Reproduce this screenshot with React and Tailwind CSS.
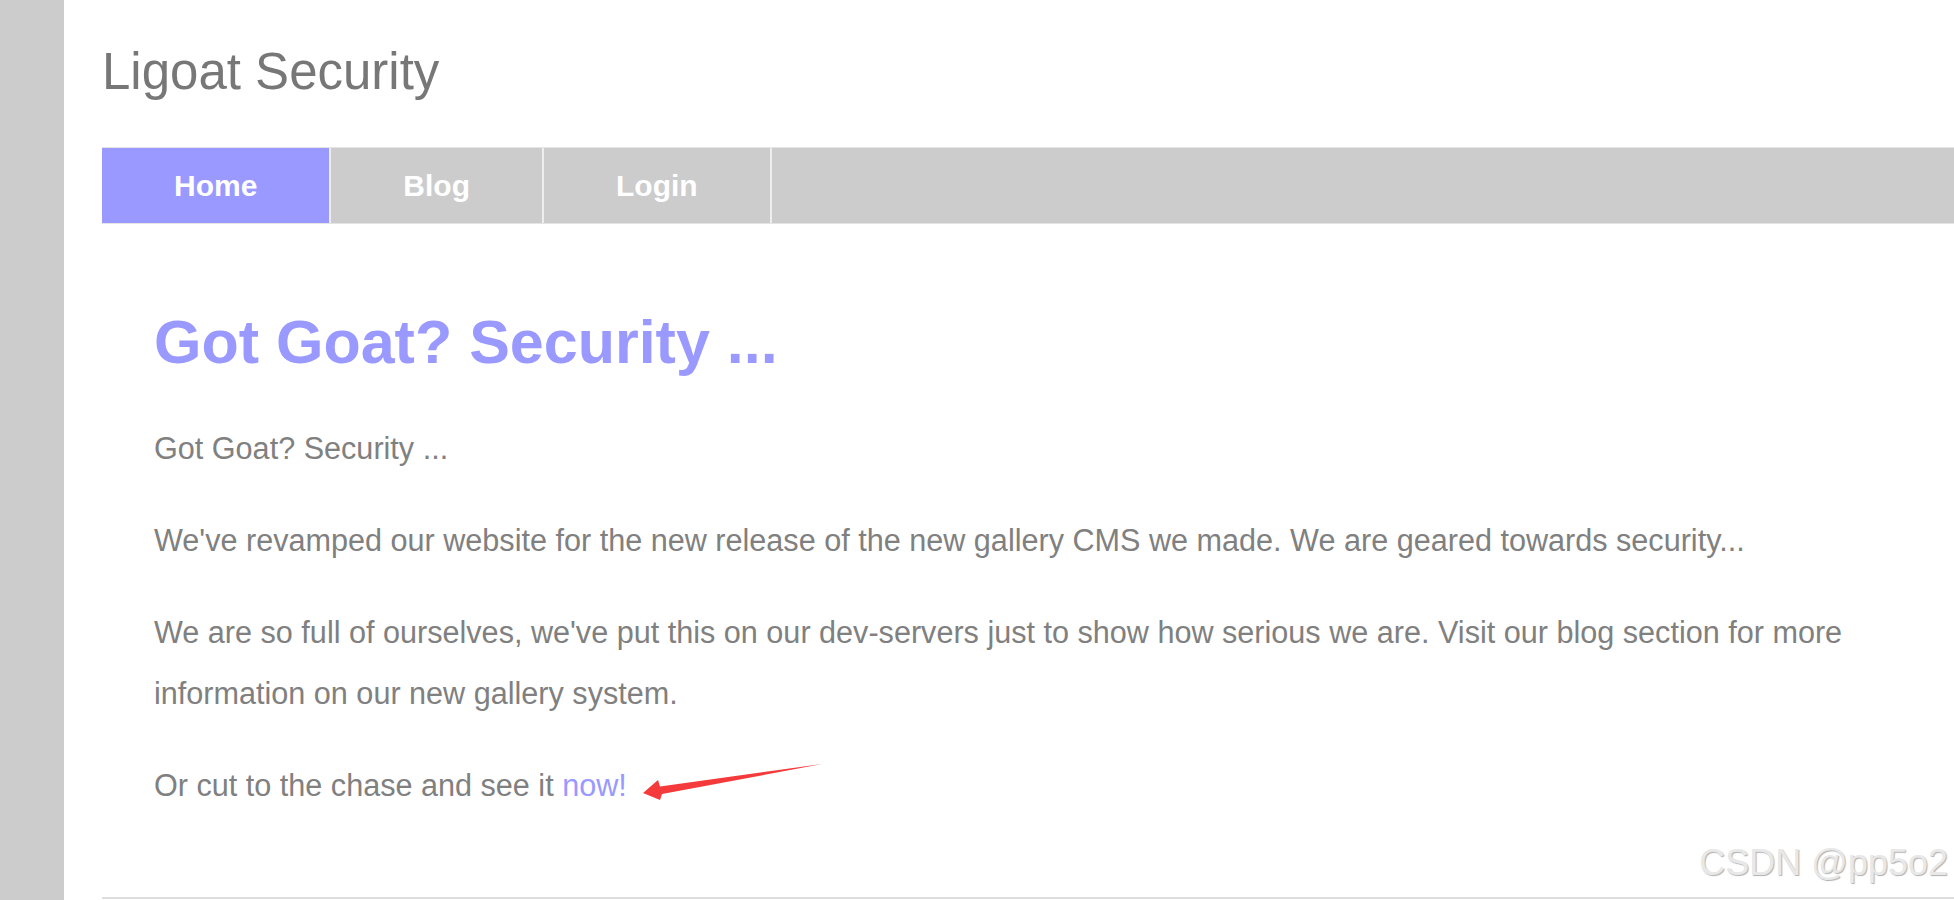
export default function App() {
  const font = { fontFamily: '"Liberation Sans", Arial, sans-serif' };
  return (
    <div className="relative flex h-[900px] w-[1954px] overflow-hidden bg-white" style={font}>
      <div className="w-[64px] shrink-0 bg-[#cccccc]" />
      <div className="flex flex-1 flex-col pl-[38px]">
        <div className="pt-[42px] text-[51px] leading-[59px] text-[#777777]">Ligoat Security</div>
        <nav className="mt-[46px] flex h-[77px] border-y border-[#e4e4e4] bg-[#cccccc]">
          <a className="flex items-center border-r-2 border-[#eeeeee] bg-[#9999ff] px-[72px] text-[30px] font-bold text-white">Home</a>
          <a className="flex items-center border-r-2 border-[#eeeeee] px-[72px] text-[30px] font-bold text-white">Blog</a>
          <a className="flex items-center border-r-2 border-[#eeeeee] px-[72px] text-[30px] font-bold text-white">Login</a>
        </nav>
        <div className="pl-[52px] pr-[52px]">
          <h1 className="mt-[83px] text-[61px] font-bold leading-[70px] text-[#9999ff]">Got Goat? Security ...</h1>
          <div className="mt-[41px] flex flex-col gap-[31px] text-[30.6px] leading-[61px] text-[#808080]">
            <p>Got Goat? Security ...</p>
            <p>We've revamped our website for the new release of the new gallery CMS we made. We are geared towards security...</p>
            <p>We are so full of ourselves, we've put this on our dev-servers just to show how serious we are. Visit our blog section for more information on our new gallery system.</p>
            <p>
              Or cut to the chase and see it <a className="text-[#9999ff]">now!</a>
            </p>
          </div>
        </div>
        <div className="mt-auto mb-[1px] h-[2px] bg-[#dddddd]" />
      </div>
      <svg className="pointer-events-none absolute left-0 top-0" width="1954" height="900" viewBox="0 0 1954 900">
        <polygon points="643,793 658,780 660,786.5 822,764 662,794 660,800" fill="#f43a3a" />
      </svg>
      <div className="pointer-events-none absolute right-[6px] top-[842px] text-[36px] leading-[42px] text-[#e8e8e8] [text-shadow:1px_1px_1px_#b0b0b0]">
        CSDN @pp5o2
      </div>
    </div>
  );
}
